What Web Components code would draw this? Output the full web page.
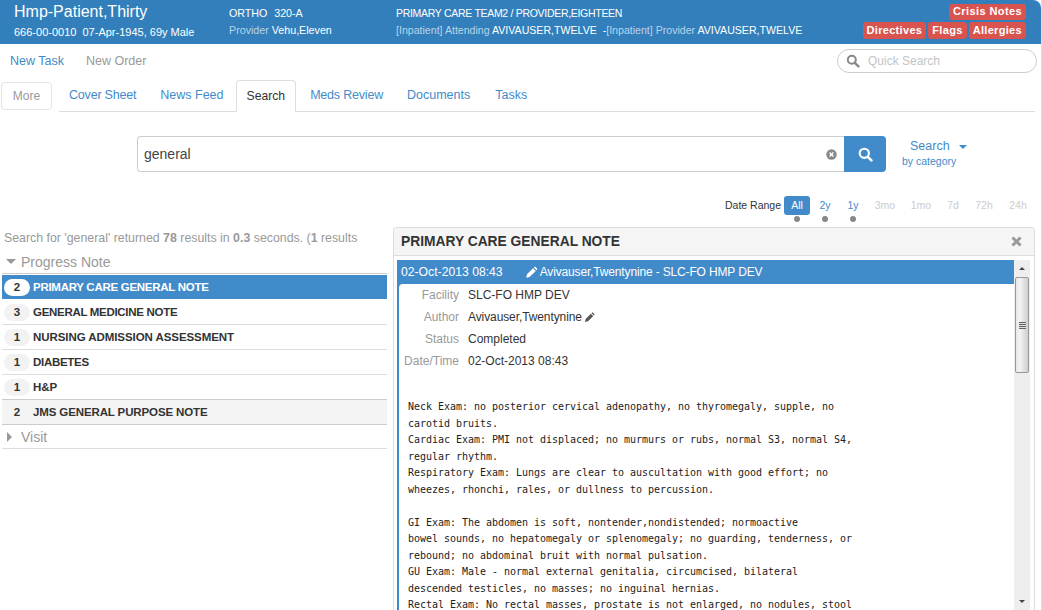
<!DOCTYPE html>
<html>
<head>
<meta charset="utf-8">
<title>Search</title>
<style>
    html, body { margin: 0; height: 610px; overflow: hidden; background: #fff; }
    body { font-family: "Liberation Sans", Arial, sans-serif; font-size: 12px; color: #333; }
    #app { display: block; width: 1041px; height: 610px; overflow: hidden; border-right: 1px solid #ddd; }
</style>
</head>
<body>
<div id="app">
    <patient-header></patient-header>
    <action-bar></action-bar>
    <tab-bar></tab-bar>
    <search-box></search-box>
    <date-range></date-range>
    <div style="display:flex">
        <result-list>
            <result-group name="Progress Note" open>
                <result-row count="2" selected style="--ls:-.28px">PRIMARY CARE GENERAL NOTE</result-row>
                <result-row count="3" style="--ls:-.3px">GENERAL MEDICINE NOTE</result-row>
                <result-row count="1" style="--ls:-.07px">NURSING ADMISSION ASSESSMENT</result-row>
                <result-row count="1" style="--ls:-.3px">DIABETES</result-row>
                <result-row count="1">H&amp;P</result-row>
                <result-row count="2" shaded style="--ls:-.12px">JMS GENERAL PURPOSE NOTE</result-row>
            </result-group>
            <result-group name="Visit"></result-group>
        </result-list>
        <note-panel></note-panel>
    </div>
</div>

<script>
const PENCIL = 'M1.5 14.5l.9-4.2 7.6-7.6 3.3 3.3-7.6 7.6zM10.9 1.8l.7-.7c.4-.4 1-.4 1.4 0l1.9 1.9c.4.4.4 1 0 1.4l-.7.7z';

class PatientHeader extends HTMLElement {
    connectedCallback() {
        this.attachShadow({ mode: 'open' });
        this.shadowRoot.innerHTML = `
            <style>
                :host {
                    display: flex;
                    height: 44px;
                    background: #337fbc;
                    color: #fff;
                    border-top-right-radius: 8px;
                    font-size: 11px;
                    box-sizing: border-box;
                    line-height: 16px;
                }
                .who { width: 215px; padding: 2px 0 0 14px; }
                .name { font-size: 16px; line-height: 20px; margin-bottom: 2px; }
                .where { width: 167px; padding-top: 5px; font-size: 10.7px; }
                .where div + div { margin-top: 1px; }
                .ward { word-spacing: -.7px; }
                .team { flex: 1; padding-top: 5px; white-space: nowrap; }
                .caps { font-size: 10.5px; letter-spacing: -.3px; }
                .long { font-size: 10.6px; margin-top: 1px; }
                .dim { color: #b9d3e8; }
                .flags {
                    padding: 4px 15px 0 0;
                    display: flex;
                    flex-direction: column;
                    align-items: flex-end;
                    gap: 2px;
                }
                .flags div { display: flex; gap: 2px; }
                .flag {
                    background: #d9534f;
                    border-radius: 3px;
                    font-weight: bold;
                    height: 16px;
                    line-height: 15px;
                    padding: 0 4px;
                    letter-spacing: .4px;
                }
                .flags div + div .flag { height: 17px; line-height: 17px; letter-spacing: .32px; }
            </style>
            <div class="who">
                <div class="name">Hmp-Patient,Thirty</div>
                <div>666-00-0010 &nbsp;07-Apr-1945, 69y Male</div>
            </div>
            <div class="where">
                <div class="ward">ORTHO &nbsp; 320-A</div>
                <div><span class="dim">Provider</span> Vehu,Eleven</div>
            </div>
            <div class="team">
                <div class="caps">PRIMARY CARE TEAM2 / PROVIDER,EIGHTEEN</div>
                <div class="long"><span class="dim">[Inpatient] Attending</span> AVIVAUSER,TWELVE &nbsp;-<span class="dim">[Inpatient] Provider</span> AVIVAUSER,TWELVE</div>
            </div>
            <div class="flags">
                <div><span class="flag">Crisis Notes</span></div>
                <div><span class="flag">Directives</span><span class="flag">Flags</span><span class="flag">Allergies</span></div>
            </div>
        `;
    }
}

class ActionBar extends HTMLElement {
    connectedCallback() {
        this.attachShadow({ mode: 'open' });
        this.shadowRoot.innerHTML = `
            <style>
                :host {
                    display: flex;
                    align-items: center;
                    height: 36px;
                    padding: 0 4px 3px 10px;
                    box-sizing: border-box;
                    font-size: 12.5px;
                }
                a { color: #428bca; text-decoration: none; margin-right: 22px; }
                a.off { color: #999; }
                .quick {
                    margin-left: auto;
                    width: 200px;
                    height: 24px;
                    box-sizing: border-box;
                    border: 1px solid #ccc;
                    border-radius: 12px;
                    display: flex;
                    align-items: center;
                    gap: 8px;
                    padding-left: 8px;
                    font-size: 12px;
                    color: #c4c4c4;
                }
                svg { display: block; }
            </style>
            <a href="#">New Task</a>
            <a href="#" class="off">New Order</a>
            <div class="quick">
                <svg width="14" height="14" viewBox="0 0 14 14"><circle cx="5.8" cy="5.8" r="4" fill="none" stroke="#888" stroke-width="2"/><path d="M8.8 8.8l3.7 3.7" stroke="#888" stroke-width="2.4" stroke-linecap="round"/></svg>
                <span>Quick Search</span>
            </div>
        `;
    }
}

class TabBar extends HTMLElement {
    connectedCallback() {
        this.attachShadow({ mode: 'open' });
        this.shadowRoot.innerHTML = `
            <style>
                :host {
                    display: flex;
                    align-items: flex-end;
                    height: 32px;
                    padding-left: 1px;
                    margin-right: 6px;
                    font-size: 12.5px;
                    box-sizing: border-box;
                }
                .more {
                    width: 51px;
                    height: 28px;
                    box-sizing: border-box;
                    border: 1px solid #e3e3e3;
                    border-radius: 4px;
                    color: #999;
                    text-align: center;
                    line-height: 26px;
                    font-size: 12px;
                    margin: 0 7px 2px 0;
                }
                .tabs {
                    flex: 1;
                    display: flex;
                    height: 32px;
                    box-sizing: border-box;
                    border-bottom: 1px solid #ddd;
                }
                a {
                    color: #428bca;
                    text-decoration: none;
                    padding: 0 10px;
                    margin-right: 3px;
                    line-height: 31px;
                }
                a.tight { letter-spacing: -.2px; }
                a.wide { margin-right: 5px; }
                a.active {
                    color: #333;
                    height: 32px;
                    box-sizing: border-box;
                    background: #fff;
                    border: 1px solid #ddd;
                    border-bottom: 0;
                    border-radius: 4px 4px 0 0;
                    margin-right: 4px;
                    line-height: 30px;
                    font-size: 12.2px;
                }
            </style>
            <div class="more">More</div>
            <div class="tabs">
                <a href="#" class="tight" style="margin-right:4px">Cover Sheet</a>
                <a href="#" style="margin-right:2px">News Feed</a>
                <a href="#" class="active">Search</a>
                <a href="#" class="tight" style="margin-right:4px">Meds Review</a>
                <a href="#" class="wide">Documents</a>
                <a href="#">Tasks</a>
            </div>
        `;
    }
}

class SearchBox extends HTMLElement {
    connectedCallback() {
        this.attachShadow({ mode: 'open' });
        this.shadowRoot.innerHTML = `
            <style>
                :host {
                    display: flex;
                    height: 36px;
                    margin-top: 24px;
                    padding-left: 137px;
                }
                .field {
                    width: 707px;
                    box-sizing: border-box;
                    border: 1px solid #ccc;
                    border-right: 0;
                    border-radius: 4px 0 0 4px;
                    display: flex;
                    align-items: center;
                    justify-content: space-between;
                    padding: 0 7px 0 6px;
                    font-size: 14px;
                    color: #444;
                }
                .go {
                    width: 42px;
                    background: #428bca;
                    border-radius: 0 4px 4px 0;
                    display: flex;
                    align-items: center;
                    justify-content: center;
                }
                .scope {
                    margin-left: 16px;
                    width: 68px;
                    color: #428bca;
                    font-size: 12.5px;
                    line-height: 15px;
                    padding-top: 3px;
                    white-space: nowrap;
                }
                .scope span { margin-left: 8px; }
                .scope i {
                    display: inline-block;
                    margin-left: 9px;
                    border: 4px solid transparent;
                    border-top-color: #428bca;
                    border-bottom: 0;
                    vertical-align: 1px;
                }
                .scope small { display: block; font-size: 10.5px; }
                svg { display: block; }
            </style>
            <div class="field">
                <span>general</span>
                <svg width="11" height="11" viewBox="0 0 11 11"><circle cx="5.5" cy="5.5" r="5.2" fill="#888"/><path d="M3.6 3.6l3.8 3.8M7.4 3.6l-3.8 3.8" stroke="#fff" stroke-width="1.4"/></svg>
            </div>
            <div class="go">
                <svg width="15" height="15" viewBox="0 0 15 15"><circle cx="6.3" cy="6.3" r="4.6" fill="none" stroke="#fff" stroke-width="2.1"/><path d="M9.8 9.8l3.6 3.6" stroke="#fff" stroke-width="2.5" stroke-linecap="round"/></svg>
            </div>
            <div class="scope"><span>Search</span><i></i><small>by category</small></div>
        `;
    }
}

class DateRange extends HTMLElement {
    connectedCallback() {
        this.attachShadow({ mode: 'open' });
        const items = [['All', 26, 'on', 1], ['2y', 30, 'link', 1], ['1y', 26, 'link', 1], ['3mo', 38, '', 0],
            ['1mo', 34, '', 0], ['7d', 30, '', 0], ['72h', 32, '', 0], ['24h', 36, '', 0]];
        this.shadowRoot.innerHTML = `
            <style>
                :host {
                    display: flex;
                    justify-content: flex-end;
                    height: 31px;
                    margin-top: 24px;
                    padding-right: 5px;
                    font-size: 10.5px;
                }
                .label { height: 19px; line-height: 19px; margin-right: 3px; color: #333; }
                .item { text-align: center; }
                .text { height: 19px; line-height: 19px; color: #ccc; border-radius: 3px; }
                .link .text { color: #428bca; }
                .on .text { background: #428bca; color: #fff; }
                .dot { width: 6px; height: 6px; border-radius: 50%; background: #888; margin: 1px auto 0; }
            </style>
            <div class="label">Date Range</div>
            ${items.map(([t, w, c, d]) => `
                <div class="item ${c}" style="width:${w}px">
                    <div class="text">${t}</div>
                    ${d ? '<div class="dot"></div>' : ''}
                </div>`).join('')}
        `;
    }
}

class ResultList extends HTMLElement {
    connectedCallback() {
        this.attachShadow({ mode: 'open' });
        this.shadowRoot.innerHTML = `
            <style>
                :host {
                    display: block;
                    width: 385px;
                    margin-left: 2px;
                    flex: none;
                }
                .summary {
                    margin: 4px 0 0 2px;
                    height: 18px;
                    line-height: 14px;
                    font-size: 12.35px;
                    color: #999;
                    white-space: nowrap;
                    overflow: hidden;
                }
            </style>
            <div class="summary">Search for 'general' returned <b>78</b> results in <b>0.3</b> seconds. (<b>1</b> results</div>
            <slot></slot>
        `;
    }
}

class ResultGroup extends HTMLElement {
    connectedCallback() {
        const open = this.hasAttribute('open');
        this.attachShadow({ mode: 'open' });
        this.shadowRoot.innerHTML = `
            <style>
                :host { display: block; }
                .head {
                    display: flex;
                    align-items: center;
                    height: 24px;
                    box-sizing: border-box;
                    color: #999;
                    font-size: 14px;
                    border-bottom: 1px solid #ddd;
                    padding-left: 5px;
                }
                :host([open]) .head { height: 25px; border-bottom: 1px solid #ccc; margin-bottom: 1px; padding-top: 1px; }
                i { display: block; border: 5px solid transparent; margin-right: 5px; }
                .down { border-top-color: #999; border-bottom: 0; width: 0; margin-top: -1px; margin-left: -1px; }
                .right { border-left-color: #999; border-right: 0; margin-right: 9px; }
            </style>
            <div class="head"><i class="${open ? 'down' : 'right'}"></i>${this.getAttribute('name')}</div>
            <slot></slot>
        `;
    }
}

class ResultRow extends HTMLElement {
    connectedCallback() {
        this.attachShadow({ mode: 'open' });
        this.shadowRoot.innerHTML = `
            <style>
                :host {
                    display: flex;
                    align-items: center;
                    height: 25px;
                    box-sizing: border-box;
                    border-bottom: 1px solid #ddd;
                    padding-left: 2px;
                    font-size: 11.5px;
                    font-weight: bold;
                    color: #333;
                }
                :host([selected]) { background: #428bca; color: #fff; border-bottom-color: #fff; }
                :host([shaded]) { background: #f4f4f4; border-top: 1px solid #ccc; border-bottom-color: #ccc; height: 26px; margin-top: -1px; }
                .count {
                    width: 26px;
                    height: 17px;
                    line-height: 17px;
                    border-radius: 9px;
                    background: #f2f2f2;
                    color: #333;
                    text-align: center;
                    margin-right: 3px;
                    flex: none;
                }
                .name { letter-spacing: var(--ls, 0); }
                :host([selected]) .count { background: #fff; }
                :host([shaded]) .count { background: transparent; }
            </style>
            <span class="count">${this.getAttribute('count')}</span>
            <span class="name"><slot></slot></span>
        `;
    }
}

class NotePanel extends HTMLElement {
    connectedCallback() {
        this.attachShadow({ mode: 'open' });
        this.shadowRoot.innerHTML = `
            <style>
                :host {
                    display: block;
                    width: 642px;
                    height: 383px;
                    margin-left: 6px;
                    box-sizing: border-box;
                    border: 1px solid #ddd;
                    border-bottom: 0;
                    border-radius: 4px 4px 0 0;
                    font-size: 12px;
                }
                header {
                    display: flex;
                    align-items: center;
                    justify-content: space-between;
                    height: 28px;
                    box-sizing: border-box;
                    background: #f5f5f5;
                    border-bottom: 1px solid #ddd;
                    border-radius: 3px 3px 0 0;
                    padding: 0 12px 0 7px;
                    font-size: 13.8px;
                    font-weight: bold;
                    color: #333;
                }
                .body { display: flex; padding: 4px 4px 0 3px; height: 350px; overflow: hidden; }
                .doc { flex: 1; min-width: 0; }
                .title {
                    height: 24px;
                    background: #428bca;
                    color: #fff;
                    display: flex;
                    align-items: center;
                    padding-left: 4px;
                    white-space: pre;
                    font-size: 12.2px;
                }
                .title svg { margin: 0 2px 0 22px; }
                .title span { font-size: 12px; letter-spacing: -.15px; }
                .content { background: #428bca; padding-left: 2px; height: 326px; }
                .inner { background: #fff; border-top-left-radius: 4px; height: 326px; box-sizing: border-box; }
                dl { margin: 0; padding: 0; }
                .meta { display: flex; height: 22px; align-items: center; }
                .meta b { font-weight: normal; color: #999; width: 60px; text-align: right; margin-right: 9px; flex: none; }
                .meta svg { margin-left: 2px; }
                .author { letter-spacing: -.1px; }
                pre {
                    margin: 27px 0 0 9px;
                    font-family: "DejaVu Sans Mono", monospace;
                    font-size: 10px;
                    letter-spacing: -.02px;
                    line-height: 16.5px;
                    color: #222;
                }
                .scroll {
                    width: 16px;
                    flex: none;
                    background: #eee;
                    display: flex;
                    flex-direction: column;
                    align-items: center;
                }
                .arrow { height: 17px; display: flex; align-items: center; flex: none; }
                .arrow i { display: block; border: 3.5px solid transparent; border-bottom-color: #444; border-top: 0; }
                .arrow.dn { margin-top: auto; }
                .arrow.dn i { border-bottom: 0; border-top: 3.5px solid #444; }
                .thumb {
                    width: 14px;
                    height: 96px;
                    flex: none;
                    box-sizing: border-box;
                    border: 1px solid #999;
                    border-radius: 2px;
                    background: linear-gradient(90deg, #e6e6e6, #f4f4f4 30%, #cfcfcf);
                    display: flex;
                    align-items: center;
                    justify-content: center;
                }
                .thumb span { display: block; width: 7px; height: 7px; background: repeating-linear-gradient(#666 0 1px, #ddd 1px 2px); }
                svg { display: block; }
            </style>
            <header>
                <span>PRIMARY CARE GENERAL NOTE</span>
                <svg width="11" height="11" viewBox="0 0 11 11"><path d="M1.5 1.5l8 8M9.5 1.5l-8 8" stroke="#999" stroke-width="3"/></svg>
            </header>
            <div class="body">
                <div class="doc">
                    <div class="title">02-Oct-2013 08:43<svg width="13" height="13" viewBox="0 0 16 16"><path fill="#fff" d="${PENCIL}"/></svg><span>Avivauser,Twentynine - SLC-FO HMP DEV</span></div>
                    <div class="content">
                        <div class="inner">
                            <dl>
                                <div class="meta"><b>Facility</b><span>SLC-FO HMP DEV</span></div>
                                <div class="meta"><b>Author</b><span class="author">Avivauser,Twentynine</span><svg width="11" height="11" viewBox="0 0 16 16"><path fill="#555" d="${PENCIL}"/></svg></div>
                                <div class="meta"><b>Status</b><span>Completed</span></div>
                                <div class="meta"><b>Date/Time</b><span>02-Oct-2013 08:43</span></div>
                            </dl>
<pre>Neck Exam: no posterior cervical adenopathy, no thyromegaly, supple, no
carotid bruits.
Cardiac Exam: PMI not displaced; no murmurs or rubs, normal S3, normal S4,
regular rhythm.
Respiratory Exam: Lungs are clear to auscultation with good effort; no
wheezes, rhonchi, rales, or dullness to percussion.

GI Exam: The abdomen is soft, nontender,nondistended; normoactive
bowel sounds, no hepatomegaly or splenomegaly; no guarding, tenderness, or
rebound; no abdominal bruit with normal pulsation.
GU Exam: Male - normal external genitalia, circumcised, bilateral
descended testicles, no masses; no inguinal hernias.
Rectal Exam: No rectal masses, prostate is not enlarged, no nodules, stool</pre>
                        </div>
                    </div>
                </div>
                <div class="scroll">
                    <div class="arrow"><i></i></div>
                    <div class="thumb"><span></span></div>
                    <div class="arrow dn"><i></i></div>
                </div>
            </div>
        `;
    }
}

customElements.define('patient-header', PatientHeader);
customElements.define('action-bar', ActionBar);
customElements.define('tab-bar', TabBar);
customElements.define('search-box', SearchBox);
customElements.define('date-range', DateRange);
customElements.define('result-list', ResultList);
customElements.define('result-group', ResultGroup);
customElements.define('result-row', ResultRow);
customElements.define('note-panel', NotePanel);
</script>
</body>
</html>
